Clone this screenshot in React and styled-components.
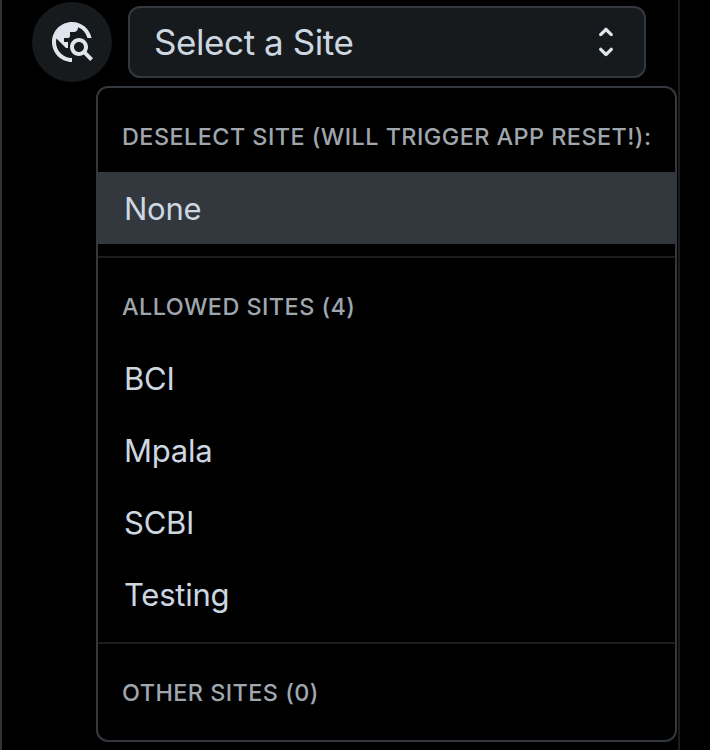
import React from "react";
import styled, { createGlobalStyle } from "styled-components";
import { MdTravelExplore } from "react-icons/md";

const GlobalStyle = createGlobalStyle`
  * { box-sizing: border-box; }
  body {
    margin: 0;
    background: #000;
    font-family: Inter, "Liberation Sans", sans-serif;
    -webkit-font-smoothing: antialiased;
    overflow: hidden;
  }
`;

const Page = styled.div`
  display: flex;
  height: 750px;
  background: #000;
`;

const Panel = styled.main`
  width: 680px;
  height: 750px;
  border-left: 2px solid #323232;
  border-right: 2px solid #1c1c1c;
`;

const Toolbar = styled.div`
  display: flex;
  align-items: center;
  gap: 16px;
  height: 84px;
  padding-left: 30px;
`;

const IconBadge = styled.div`
  display: flex;
  align-items: center;
  justify-content: center;
  width: 80px;
  height: 80px;
  border-radius: 50%;
  background: #171a1c;
  color: #dfe5ec;
  font-size: 48px;
`;

const SelectButton = styled.button`
  display: flex;
  align-items: center;
  justify-content: space-between;
  width: 518px;
  height: 72px;
  padding: 0 18px 0 24px;
  border: 2px solid #32383e;
  border-radius: 12px;
  background: #171a1c;
  color: #cdd7e1;
  font: 400 35px/54px Inter, "Liberation Sans", sans-serif;
  letter-spacing: -0.42px;
`;

const UnfoldSvg = styled.svg`
  width: 40px;
  height: 40px;
  fill: #dfe5ec;
`;

const Menu = styled.div`
  width: 581px;
  height: 656px;
  margin: 2px 0 0 94px;
  padding-top: 12px;
  border: 2px solid #32383e;
  border-radius: 12px;
  background: #000;
`;

const GroupHeading = styled.div`
  display: flex;
  align-items: center;
  height: 72px;
  padding-left: 24px;
  color: #9fa6ad;
  font-size: 23.4px;
  font-weight: 450;
  letter-spacing: 0.46px;
  white-space: nowrap;
`;

const Option = styled.div`
  display: flex;
  align-items: center;
  height: 72px;
  padding-left: 26px;
  background: ${(p) => (p.$selected ? "#32383e" : "transparent")};
  color: #cdd7e1;
  font-size: 31px;
  letter-spacing: -0.25px;
`;

const Divider = styled.div`
  height: 2px;
  margin: 12px 0;
  background: #1c1c1c;
`;

function UnfoldIcon() {
  return (
    <UnfoldSvg viewBox="0 0 24 24" aria-hidden="true">
      <path d="m12 5.83 2.46 2.46c.39.39 1.02.39 1.41 0 .39-.39.39-1.02 0-1.41L12.7 3.7a.9959.9959 0 0 0-1.41 0L8.12 6.88c-.39.39-.39 1.02 0 1.41.39.39 1.02.39 1.41 0L12 5.83zm0 12.34-2.46-2.46a.9959.9959 0 0 0-1.41 0c-.39.39-.39 1.02 0 1.41l3.17 3.18c.39.39 1.02.39 1.41 0l3.17-3.17c.39-.39.39-1.02 0-1.41a.9959.9959 0 0 0-1.41 0L12 18.17z" />
    </UnfoldSvg>
  );
}

const allowedSites = ["BCI", "Mpala", "SCBI", "Testing"];

export default function App() {
  return (
    <Page>
      <GlobalStyle />
      <Panel>
        <Toolbar>
          <IconBadge>
            <MdTravelExplore />
          </IconBadge>
          <SelectButton type="button">
            <span>Select a Site</span>
            <UnfoldIcon />
          </SelectButton>
        </Toolbar>
        <Menu>
          <GroupHeading>DESELECT SITE (WILL TRIGGER APP RESET!):</GroupHeading>
          <Option $selected>None</Option>
          <Divider />
          <GroupHeading>ALLOWED SITES (4)</GroupHeading>
          {allowedSites.map((site) => (
            <Option key={site}>{site}</Option>
          ))}
          <Divider />
          <GroupHeading>OTHER SITES (0)</GroupHeading>
        </Menu>
      </Panel>
    </Page>
  );
}
